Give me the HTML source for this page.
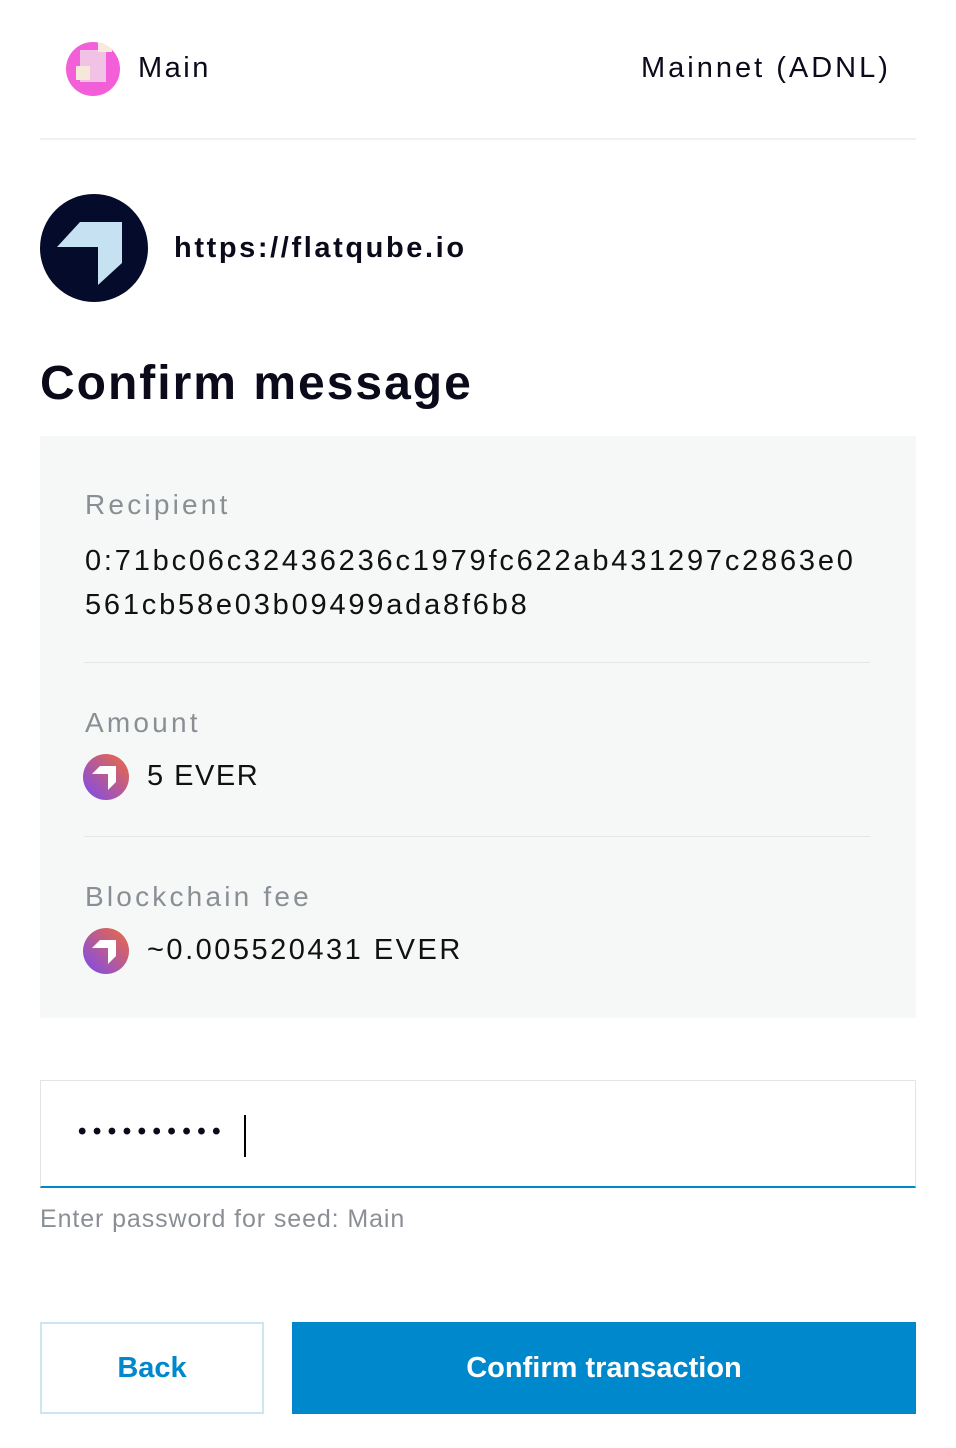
<!DOCTYPE html>
<html><head><meta charset="utf-8"><style>
*{margin:0;padding:0;box-sizing:border-box}
body{width:956px;height:1448px;background:#fff;font-family:"Liberation Sans",sans-serif;color:#0a0a1a;position:relative;overflow:hidden}
.abs{position:absolute}
.lbl{font-size:28px;color:#8a8f96;letter-spacing:3.2px}
.val{font-size:29px;color:#111;letter-spacing:1.5px}
</style></head><body>
<div class="abs" style="left:66px;top:42px;width:54px;height:54px;border-radius:50%;overflow:hidden;background:#f25fd9">
<div class="abs" style="left:14px;top:8px;width:26px;height:32px;background:#f1c2e6"></div>
<div class="abs" style="left:10px;top:24px;width:14px;height:14px;background:#f6e8d8"></div>
<div class="abs" style="left:32px;top:0;width:14px;height:10px;background:#f6eada"></div>
</div>
<div class="abs" style="left:138px;top:52px;font-size:29px;letter-spacing:2.5px">Main</div>
<div class="abs" style="left:641px;top:52px;font-size:29px;letter-spacing:3px">Mainnet (ADNL)</div>
<div class="abs" style="left:40px;top:138px;width:876px;height:2px;background:#eef0f1"></div>
<svg class="abs" style="left:40px;top:194px" width="108" height="108" viewBox="0 0 108 108">
<circle cx="54" cy="54" r="54" fill="#050b2a"/>
<polygon points="40,28 82,28 82,69 58,91 58,53 17,53" fill="#c6e2f2"/>
</svg>
<div class="abs" style="left:174px;top:232px;font-size:29px;font-weight:bold;letter-spacing:2.6px">https://flatqube.io</div>
<div class="abs" style="left:40px;top:356px;font-size:48px;font-weight:bold;letter-spacing:2px">Confirm message</div>
<div class="abs" style="left:40px;top:436px;width:876px;height:582px;background:#f6f8f8"></div>
<div class="abs lbl" style="left:85px;top:489px">Recipient</div>
<div class="abs val" style="left:85px;top:539px;line-height:44px;letter-spacing:2.8px">0:71bc06c32436236c1979fc622ab431297c2863e0<br>561cb58e03b09499ada8f6b8</div>
<div class="abs" style="left:84px;top:662px;width:786px;height:1px;background:#e4e7e8"></div>
<div class="abs lbl" style="left:85px;top:707px">Amount</div>
<svg class="abs" style="left:83px;top:754px" width="46" height="46" viewBox="0 0 46 46"><defs><linearGradient id="g" x1="0" y1="1" x2="1" y2="0"><stop offset="0" stop-color="#7a4bf0"/><stop offset="1" stop-color="#f06a3e"/></linearGradient></defs><circle cx="23" cy="23" r="23" fill="url(#g)"/><polygon points="17,12 33,12 33,28 25,36 25,20 9,20" fill="#fff"/></svg>
<div class="abs val" style="left:147px;top:760px">5 EVER</div>
<div class="abs" style="left:84px;top:836px;width:786px;height:1px;background:#e4e7e8"></div>
<div class="abs lbl" style="left:85px;top:881px">Blockchain fee</div>
<svg class="abs" style="left:83px;top:928px" width="46" height="46" viewBox="0 0 46 46"><circle cx="23" cy="23" r="23" fill="url(#g)"/><polygon points="17,12 33,12 33,28 25,36 25,20 9,20" fill="#fff"/></svg>
<div class="abs val" style="left:147px;top:934px;letter-spacing:2.5px">~0.005520431 EVER</div>
<div class="abs" style="left:40px;top:1080px;width:876px;height:108px;border:1px solid #e2e5e7;border-bottom:2px solid #0088cc"></div>
<div class="abs" style="left:78px;top:1118px;font-size:24px;letter-spacing:6.5px;font-weight:bold">••••••••••</div>
<div class="abs" style="left:244px;top:1115px;width:2px;height:42px;background:#000"></div>
<div class="abs" style="left:40px;top:1205px;font-size:25px;color:#8a8f96;letter-spacing:0.9px">Enter password for seed: Main</div>
<div class="abs" style="left:40px;top:1322px;width:224px;height:92px;border:2px solid #cde6f3;color:#0088cc;font-size:29px;font-weight:bold;display:flex;align-items:center;justify-content:center">Back</div>
<div class="abs" style="left:292px;top:1322px;width:624px;height:92px;background:#0088cc;color:#fff;font-size:29px;font-weight:bold;display:flex;align-items:center;justify-content:center">Confirm transaction</div>
</body></html>
